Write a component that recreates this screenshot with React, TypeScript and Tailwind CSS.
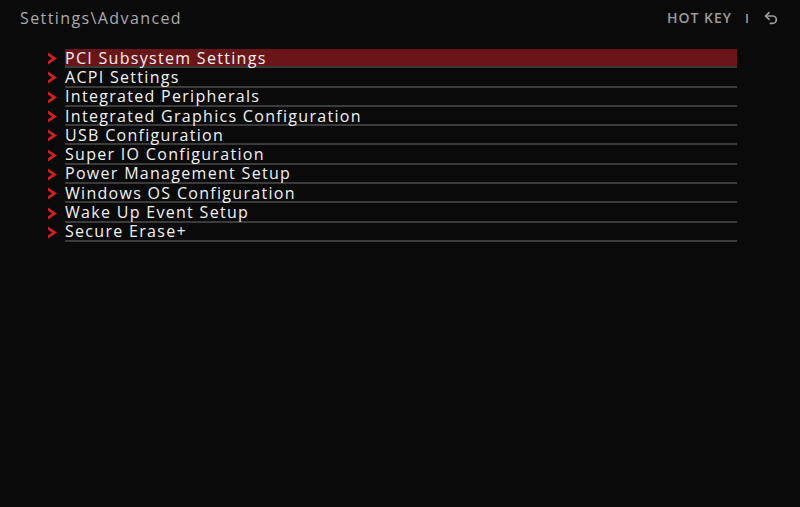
import { Undo2 } from "lucide-react"

const items = [
  "PCI Subsystem Settings",
  "ACPI Settings",
  "Integrated Peripherals",
  "Integrated Graphics Configuration",
  "USB Configuration",
  "Super IO Configuration",
  "Power Management Setup",
  "Windows OS Configuration",
  "Wake Up Event Setup",
  "Secure Erase+",
]

function Chevron() {
  return (
    <svg width="11" height="13" viewBox="0 0 11 13" className="shrink-0">
      <path d="M1 0.5 L10 6.5 L1 12.5 L1 9.2 L5.2 6.5 L1 3.8 Z" fill="#d21f1f" />
    </svg>
  )
}

export default function App() {
  return (
    <div
      className="w-[800px] h-[507px] bg-[#0a0a0a] overflow-hidden"
      style={{ fontFamily: '"Open Sans", "DejaVu Sans", sans-serif' }}
    >
      {/* top bar */}
      <div className="flex items-center justify-between h-[36px] pl-[20px] pr-[21px]">
        <span className="text-[16px] leading-[20px] text-[#ababab] tracking-[1.4px]">Settings\Advanced</span>
        <div className="flex items-center text-[#9c9c9c]">
          <span className="text-[14px] leading-[18px] font-semibold tracking-[1px]">HOT KEY</span>
          <span className="ml-[13px] text-[13px] leading-[18px] font-semibold">I</span>
          <Undo2 className="ml-[14px] w-[16px] h-[16px]" strokeWidth={2.6} />
        </div>
      </div>

      {/* menu list */}
      <div className="flex flex-col pl-[47px] w-[737px] mt-[13px]">
        {items.map((label, i) => (
          <div key={label} className="flex items-center">
            <div className="w-[18px] flex items-center">
              <Chevron />
            </div>
            <div
              className={
                i === 0
                  ? "flex-1 h-[19.3px] flex items-center border-b-2 border-[#3b3b3b] bg-[#6a1618]"
                  : "flex-1 h-[19.3px] flex items-center border-b-2 border-[#3b3b3b]"
              }
            >
              <span className="text-[16px] leading-[16px] text-[#f2f2f2] tracking-[1.3px]">{label}</span>
            </div>
          </div>
        ))}
      </div>
    </div>
  )
}
